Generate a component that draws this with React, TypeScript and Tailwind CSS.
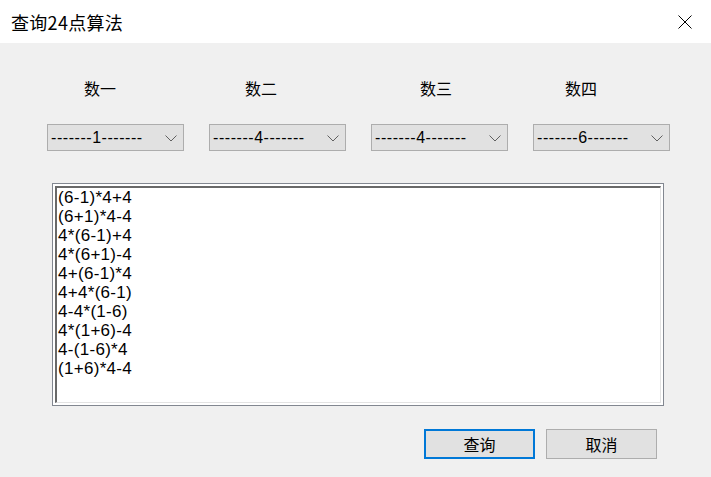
import React from "react";

const cjk = { fontFamily: '"Noto Sans CJK SC", "Noto Sans", sans-serif' };
const latin = { fontFamily: '"Liberation Sans", Arial, sans-serif' };

function Combo({ value }: { value: string }) {
  return (
    <div className="w-[137px] h-[27px] border border-[#adadad] bg-[#e1e1e1] flex items-center justify-between pl-[3px] pr-[6px]">
      <span className="text-[16px] leading-none tracking-[0.55px] text-black" style={latin}>
        {"-------" + value + "-------"}
      </span>
      <svg width="12" height="7" viewBox="0 0 12 7" className="mt-[1px]">
        <polyline points="0.5,0.5 6,6 11.5,0.5" fill="none" stroke="#606060" strokeWidth="1" />
      </svg>
    </div>
  );
}

const lines = [
  "(6-1)*4+4",
  "(6+1)*4-4",
  "4*(6-1)+4",
  "4*(6+1)-4",
  "4+(6-1)*4",
  "4+4*(6-1)",
  "4-4*(1-6)",
  "4*(1+6)-4",
  "4-(1-6)*4",
  "(1+6)*4-4",
];

export default function App() {
  return (
    <div className="w-[711px] h-[477px] bg-[#f0f0f0] flex flex-col overflow-hidden">
      <div className="h-[43px] bg-white flex items-center justify-between pl-[11px] pr-[19px] shrink-0">
        <span className="text-[18px] leading-none tracking-[0.3px] text-black" style={cjk}>
          查询24点算法
        </span>
        <svg width="14" height="14" viewBox="0 0 14 14">
          <line x1="0.5" y1="0.5" x2="13.5" y2="13.5" stroke="#000" strokeWidth="1" />
          <line x1="13.5" y1="0.5" x2="0.5" y2="13.5" stroke="#000" strokeWidth="1" />
        </svg>
      </div>

      <div className="flex mt-[34px] h-[22px] items-center text-[16px] leading-none text-black" style={cjk}>
        <span className="ml-[84px]">数一</span>
        <span className="ml-[129px]">数二</span>
        <span className="ml-[143px]">数三</span>
        <span className="ml-[113px]">数四</span>
      </div>

      <div className="flex gap-[25px] ml-[47px] mt-[25px]">
        <Combo value="1" />
        <Combo value="4" />
        <Combo value="4" />
        <Combo value="6" />
      </div>

      <div className="ml-[52px] mt-[32px] w-[612px] h-[223px] border border-[#828790] bg-white p-[2px] flex">
        <div className="flex-1 border-t-2 border-l-2 border-t-[#696969] border-l-[#696969] border-r border-b border-r-[#e3e3e3] border-b-[#e3e3e3] bg-white pl-[1px] pt-0">
          {lines.map((l, i) => (
            <div key={i} className="text-[17px] leading-[19px] tracking-[0.3px] text-black" style={latin}>
              {l}
            </div>
          ))}
        </div>
      </div>

      <div className="flex gap-[11px] ml-[424px] mt-[23px]">
        <button className="w-[111px] h-[30px] border-2 border-[#0078d7] bg-[#e1e1e1] text-[16px] leading-none text-black flex items-center justify-center" style={cjk}>
          查询
        </button>
        <button className="w-[111px] h-[30px] border border-[#adadad] bg-[#e1e1e1] text-[16px] leading-none text-black flex items-center justify-center" style={cjk}>
          取消
        </button>
      </div>
    </div>
  );
}
